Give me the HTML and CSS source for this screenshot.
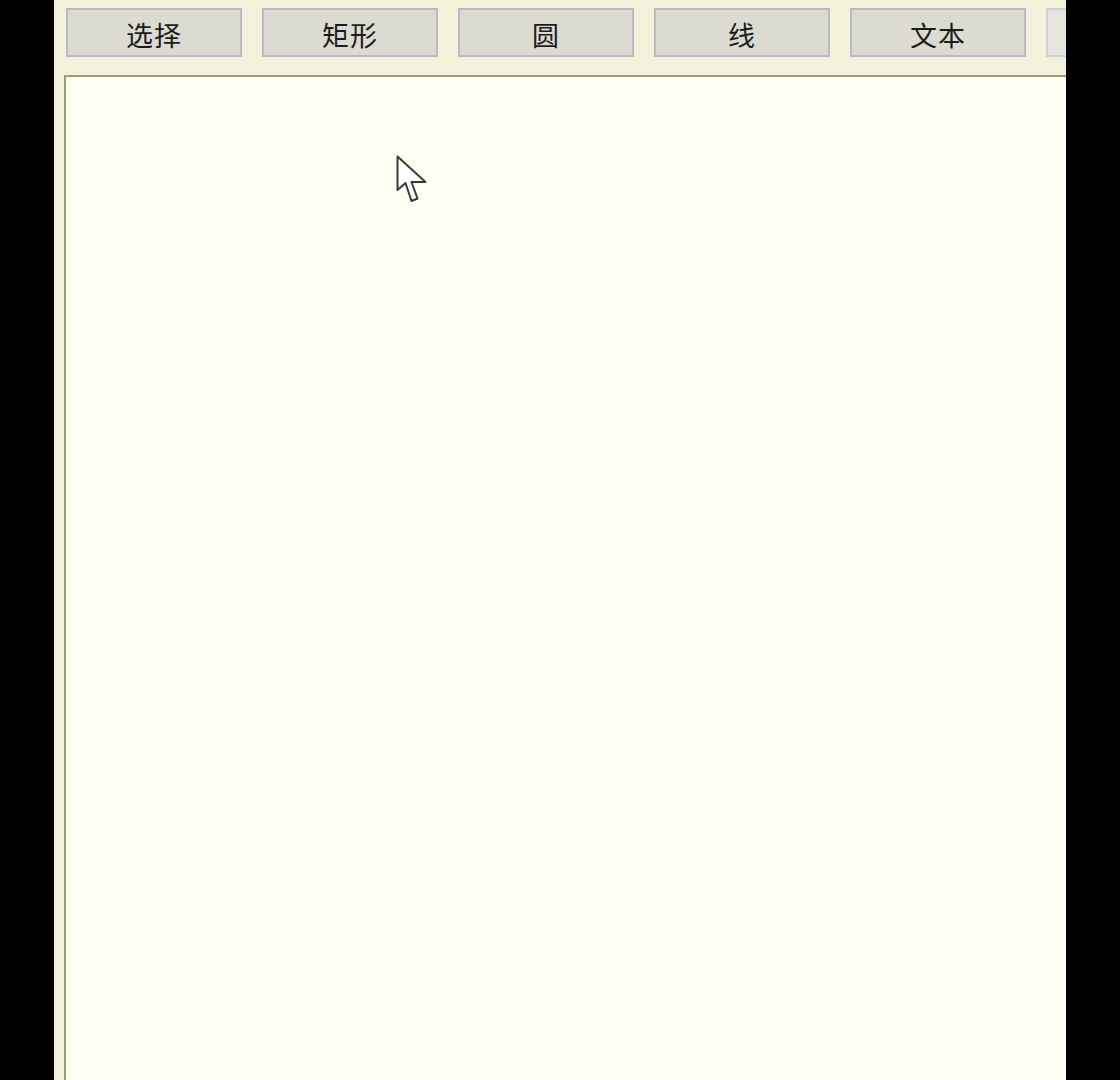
FILE: index.html
```html
<!DOCTYPE html>
<html lang="zh">
<head>
<meta charset="utf-8">
<title>画板</title>
<link rel="stylesheet" href="styles.css">
</head>
<body>
<div class="app">
  <div class="toolbar">
    <button class="tool">选择</button>
    <button class="tool">矩形</button>
    <button class="tool">圆</button>
    <button class="tool">线</button>
    <button class="tool">文本</button>
    <button class="tool tool-faint" aria-label="更多"></button>
  </div>
  <div class="canvas">
    <svg class="cursor" width="34" height="50" viewBox="0 0 34 50" aria-hidden="true">
      <path d="M1.5 1.5 L1.5 35 L9.5 28 L15.5 46 L21.5 43.5 L15.5 27 L29.5 27 Z" fill="#ffffff" stroke="#3a3a3a" stroke-width="2" stroke-linejoin="round"/>
    </svg>
  </div>
</div>
</body>
</html>
```
FILE: styles.css
```css
html, body {
  margin: 0;
  padding: 0;
  background: #000000;
  height: 100%;
  overflow: hidden;
}
.app {
  margin-left: 54px;
  width: 1012px;
  height: 1080px;
  background: #f3f1da;
  overflow: hidden;
  display: flex;
  flex-direction: column;
  font-family: "Noto Sans CJK SC", "Noto Sans", sans-serif;
}
.toolbar {
  display: flex;
  gap: 20px;
  padding: 8px 0 0 12px;
  height: 49px;
  flex: none;
  white-space: nowrap;
}
.tool {
  flex: none;
  width: 176px;
  height: 49px;
  box-sizing: border-box;
  border: 2px solid #b9b8c4;
  background: #dcdbd2;
  color: #1c1c1c;
  font-family: "Noto Sans CJK SC", "Noto Sans", sans-serif;
  font-size: 27px;
  line-height: 1;
  padding: 3px 0 0;
  display: flex;
  align-items: center;
  justify-content: center;
  letter-spacing: 1px;
}
.tool-faint {
  background: #e6e5de;
  border-color: #cfcfd8;
}
.canvas {
  position: relative;
  margin: 18px 0 0 10px;
  flex: 1;
  width: 1040px;
  background: #fefef3;
  border-top: 2px solid #9d9b7c;
  border-left: 2px solid #9d9b7c;
}
.cursor {
  position: absolute;
  left: 330px;
  top: 78px;
}
```
